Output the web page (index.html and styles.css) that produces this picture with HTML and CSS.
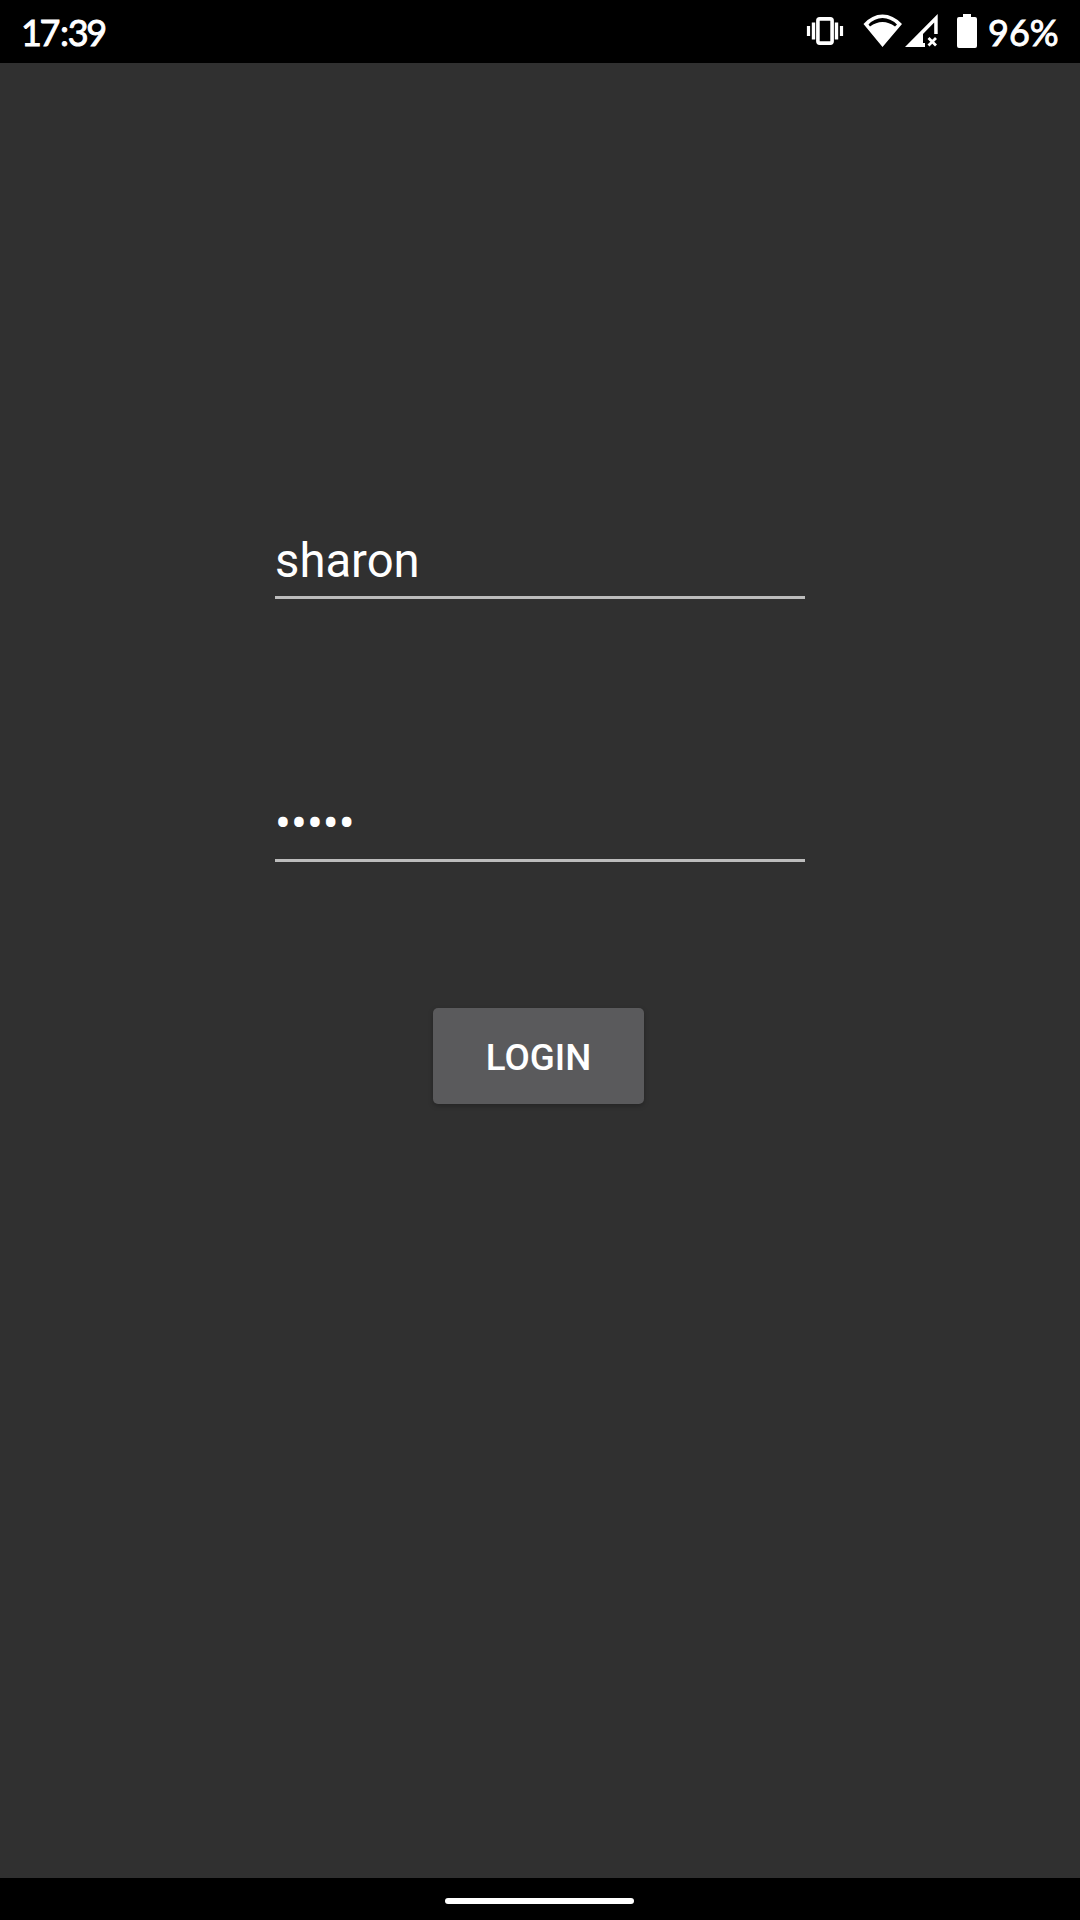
FILE: index.html
```html
<!DOCTYPE html>
<html lang="en">
<head>
<meta charset="utf-8">
<title>Login</title>
<link rel="stylesheet" href="styles.css">
</head>
<body>
<header class="status-bar">
  <span class="clock">17<span class="colon">:</span>39</span>
  <div class="status-icons">
    <svg class="vibrate" width="38" height="28" viewBox="0 0 38 28" fill="none" stroke="#fff">
      <rect x="11.900" y="1.900" width="14.200" height="24.200" rx="1.800" stroke-width="3.600"/>
      <path d="M7.500 5.500v17M30.500 5.500v17" stroke-width="3.400"/>
      <path d="M2.500 9v10M35.500 9v10" stroke-width="3.200"/>
    </svg>
    <svg class="wifi" width="40" height="34" viewBox="0 0 40 34">
      <path fill="#fff" fill-rule="evenodd" d="M.5 10Q9 .5 19.500 .5T39 10L19.500 33ZM5.500 10.500L7 12.500Q13 8 19.500 8T32 12.500L34 10.500Q27.500 4 19.500 4T5.500 10.500Z"/>
    </svg>
    <svg class="signal" width="34" height="33" viewBox="0 0 34 33">
      <path fill="#fff" d="M0 33L32.700 0V20H29.200V8.500L18 20V29H20V33Z"/>
      <path d="M23.500 24L31 31.500M31 24L23.500 31.500" stroke="#fff" stroke-width="2.800"/>
    </svg>
    <svg class="battery" width="20" height="34" viewBox="0 0 20 34">
      <path fill="#fff" d="M6 0h8v3h4q2 0 2 2v27q0 2-2 2H2q-2 0-2-2V5q0-2 2-2h4z"/>
    </svg>
    <span class="percent">96%</span>
  </div>
</header>
<main class="screen">
  <form class="login-form">
    <div class="field">sharon</div>
    <div class="field password">•••••</div>
    <button class="login" type="button">LOGIN</button>
  </form>
</main>
<footer class="nav-bar"><div class="handle"></div></footer>
</body>
</html>
```
FILE: styles.css
```css
* { box-sizing: border-box; }
body {
  margin: 0;
  height: 1920px;
  display: flex;
  flex-direction: column;
  overflow: hidden;
  background: #303030;
  color: #fff;
  font-family: Roboto, sans-serif;
}
.status-bar {
  height: 63px;
  flex: none;
  display: flex;
  justify-content: space-between;
  padding: 0 22px;
  background: #000;
  font: 36px/64px Lato, sans-serif;
  -webkit-text-stroke: 0.9px #fff;
}
.clock { margin-left: -1px; letter-spacing: -2.4px; }
.colon { margin: 0 1.2px 0 2px; }
.status-icons { display: flex; align-items: flex-start; }
.status-icons svg { flex: none; }
.vibrate { margin: 17px 19px 0 0; }
.wifi { margin: 14px 2px 0 0; }
.signal { margin: 14px 18px 0 0; }
.battery { margin: 14px 11px 0 0; }
.percent { width: 70px; white-space: nowrap; }
.screen { flex: 1; }
.login-form {
  width: 530px;
  margin-left: 275px;
  padding-top: 457px;
  display: flex;
  flex-direction: column;
}
.field {
  height: 79px;
  border-bottom: 3px solid #bcbcbc;
  font-size: 47.25px;
  line-height: 83px;
}
.password { margin-top: 184px; }
.login {
  width: 211px;
  height: 96px;
  margin: 146px 0 0 158px;
  padding: 4px 0 0;
  border: 0;
  border-radius: 5px;
  background: #5a5a5c;
  box-shadow: 0 2px 5px rgba(0, 0, 0, 0.25);
  color: #fff;
  font: 500 36.75px/92px Roboto, sans-serif;
}
.nav-bar {
  height: 42px;
  flex: none;
  padding-top: 20px;
  background: #000;
}
.handle {
  width: 189px;
  height: 6px;
  margin-left: 445px;
  border-radius: 3px;
  background: #fff;
}
```
